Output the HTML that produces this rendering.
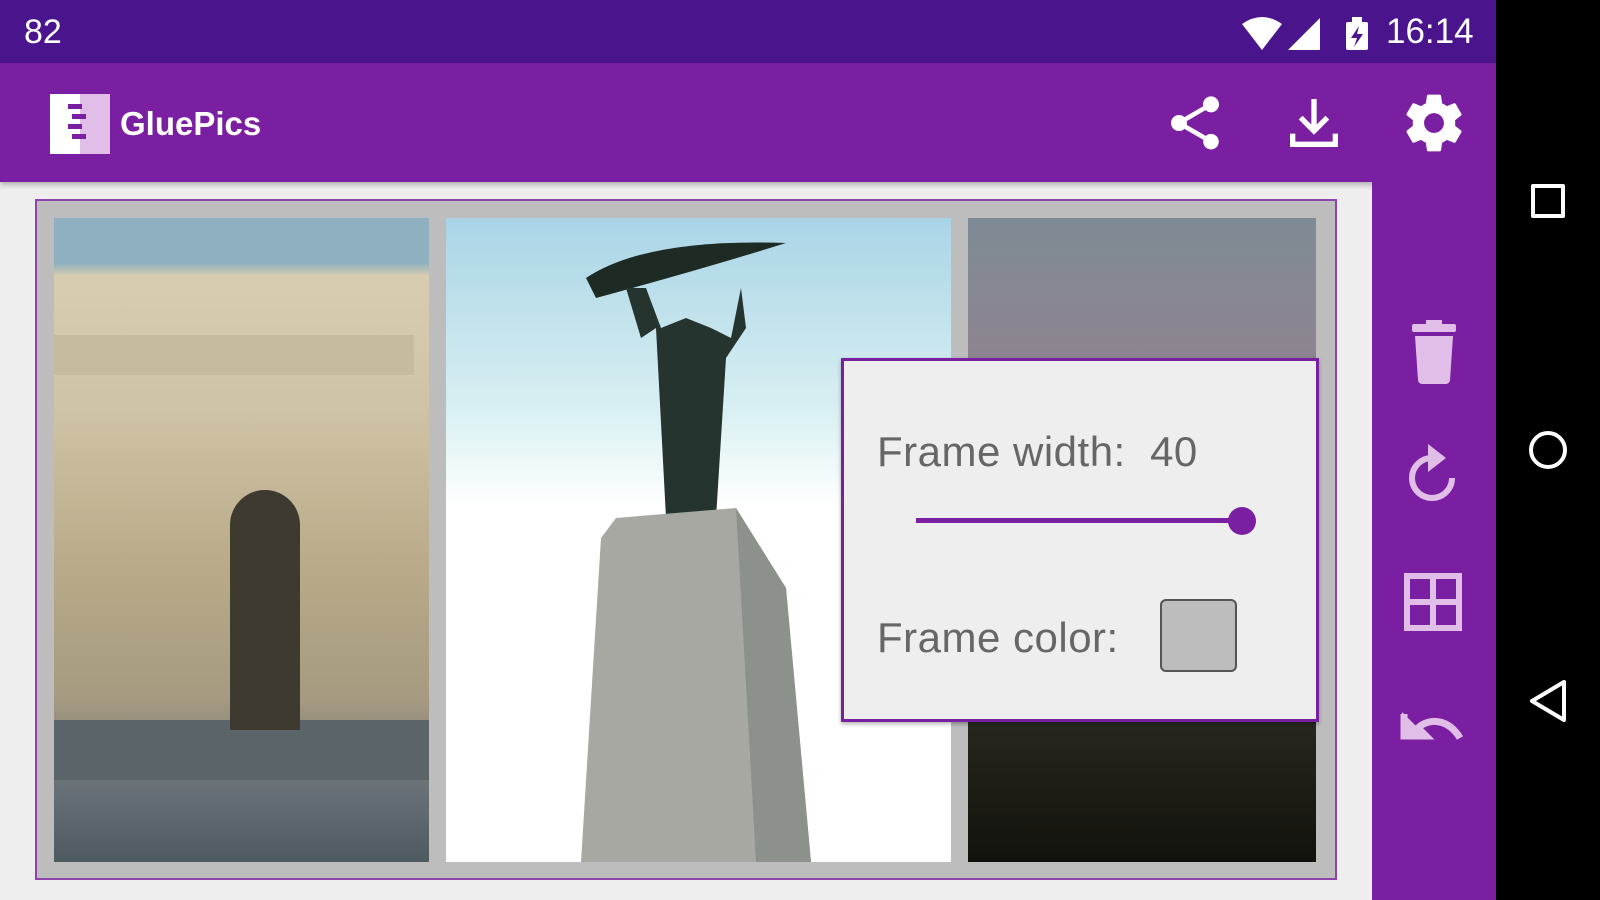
<!DOCTYPE html>
<html><head><meta charset="utf-8"><style>
*{margin:0;padding:0;box-sizing:border-box}
body{width:1600px;height:900px;overflow:hidden;background:#eee;font-family:"Liberation Sans",sans-serif;position:relative}
.a{position:absolute}
</style></head><body>
<div class="a" style="left:0;top:0;width:1496px;height:63px;background:#4a148c"></div>
<div class="a" style="left:24px;top:13px;color:#fff;font-size:34px">82</div>
<svg class="a" style="left:1240px;top:14px" width="160" height="40" viewBox="0 0 160 40">
<path d="M2 10 Q22 -4 42 10 L22 36 Z" fill="#fff"/>
<path d="M80 4 L80 36 L48 36 Z" fill="#fff"/>
<rect x="106" y="8" width="22" height="28" rx="2" fill="#fff"/><rect x="112" y="3" width="10" height="6" fill="#fff"/>
<path d="M119 12 L111 24 L117 24 L114 33 L123 20 L117 20 Z" fill="#4a148c"/>
</svg>
<div class="a" style="left:1386px;top:12px;color:#fff;font-size:35px">16:14</div>
<div class="a" style="left:0;top:63px;width:1496px;height:119px;background:#7b1fa2;box-shadow:0 3px 5px rgba(0,0,0,.25)"></div>
<svg class="a" style="left:50px;top:94px" width="60" height="60" viewBox="0 0 60 60">
<rect x="0" y="0" width="30" height="60" fill="#fff"/><rect x="30" y="0" width="30" height="60" fill="#e1bee7"/>
<g fill="#7b1fa2"><rect x="18" y="10" width="14" height="5"/><rect x="22" y="20" width="14" height="5"/><rect x="18" y="30" width="14" height="5"/><rect x="22" y="40" width="14" height="5"/></g>
</svg>
<div class="a" style="left:120px;top:105px;color:#fff;font-size:33px;font-weight:bold">GluePics</div>
<svg class="a" style="left:1163px;top:91px" width="64" height="64" viewBox="0 0 24 24"><path fill="#fff" d="M18 16.08c-.76 0-1.440.3-1.96.77L8.91 12.7c.05-.23.09-.46.09-.7s-.04-.47-.09-.7l7.050-4.11c.54.5 1.250.81 2.040.81 1.660 0 3-1.340 3-3s-1.340-3-3-3-3 1.340-3 3c0 .24.04.47.09.7L8.04 9.81C7.5 9.31 6.79 9 6 9c-1.66 0-3 1.34-3 3s1.34 3 3 3c.79 0 1.5-.31 2.04-.81l7.12 4.16c-.05.21-.08.43-.08.65 0 1.61 1.31 2.92 2.92 2.92s2.92-1.31 2.92-2.92-1.31-2.92-2.92-2.92z"/></svg>
<svg class="a" style="left:1282px;top:91px" width="64" height="64" viewBox="0 0 24 24"><path fill="none" stroke="#fff" stroke-width="2" d="M12 3v12M7 10l5 5 5-5M4 16v4h16v-4"/></svg>
<svg class="a" style="left:1400px;top:89px" width="68" height="68" viewBox="0 0 24 24"><path fill="#fff" d="M19.43 12.98c.04-.32.07-.64.07-.98s-.03-.66-.07-.98l2.11-1.65c.19-.15.24-.42.12-.64l-2-3.46c-.12-.22-.39-.3-.61-.22l-2.49 1c-.52-.4-1.08-.73-1.69-.98l-.38-2.65C14.46 2.18 14.25 2 14 2h-4c-.25 0-.46.18-.49.42l-.38 2.65c-.61.25-1.17.59-1.69.98l-2.49-1c-.23-.09-.49 0-.61.22l-2 3.46c-.13.22-.07.49.12.64l2.11 1.65c-.04.32-.07.65-.07.98s.03.66.07.98l-2.11 1.65c-.19.15-.24.42-.12.64l2 3.46c.12.22.39.3.61.22l2.49-1c.52.4 1.08.73 1.69.98l.38 2.65c.03.24.24.42.49.42h4c.25 0 .46-.18.49-.42l.38-2.65c.61-.25 1.17-.59 1.69-.98l2.49 1c.23.09.49 0 .61-.22l2-3.46c.12-.22.07-.49-.12-.64l-2.11-1.65zM12 15.5c-1.93 0-3.5-1.57-3.5-3.5s1.57-3.5 3.5-3.5 3.5 1.57 3.5 3.5-1.57 3.5-3.5 3.5z"/></svg>
<div class="a" style="left:1496px;top:0;width:104px;height:900px;background:#000"></div>
<div class="a" style="left:1531px;top:184px;width:34px;height:34px;border:4px solid #fff;border-radius:2px"></div>
<div class="a" style="left:1529px;top:431px;width:38px;height:38px;border:4px solid #fff;border-radius:50%"></div>
<svg class="a" style="left:1526px;top:678px" width="44" height="46" viewBox="0 0 44 46"><path d="M38 4 L6 23 L38 42 Z" fill="none" stroke="#fff" stroke-width="4" stroke-linejoin="round"/></svg>
<div class="a" style="left:1372px;top:182px;width:124px;height:718px;background:#7b1fa2"></div>
<svg class="a" style="left:1406px;top:320px" width="56" height="64" viewBox="0 0 56 64"><rect x="6" y="4" width="44" height="8" rx="2" fill="#e1bee7"/><rect x="20" y="0" width="16" height="6" fill="#e1bee7"/><path d="M9 16h38l-3 44c0 2-2 4-4 4H16c-2 0-4-2-4-4z" fill="#e1bee7"/></svg>
<svg class="a" style="left:1402px;top:444px" width="64" height="64" viewBox="0 0 64 64"><path d="M30 14 A20 20 0 1 0 50 34" fill="none" stroke="#e1bee7" stroke-width="6"/><path d="M26 0 L26 28 L44 14 Z" fill="#e1bee7"/></svg>
<svg class="a" style="left:1403px;top:572px" width="60" height="60" viewBox="0 0 60 60"><g fill="none" stroke="#e1bee7" stroke-width="6"><rect x="4" y="4" width="52" height="52"/><path d="M30 4v52M4 30h52"/></g></svg>
<svg class="a" style="left:1400px;top:708px" width="68" height="40" viewBox="0 0 68 40"><path d="M4 6v22h22l-8-8C28 10 48 10 60 30" fill="none" stroke="#e1bee7" stroke-width="7"/><path d="M2 4v26h26z" fill="#e1bee7"/></svg>
<div class="a" style="left:35px;top:199px;width:1302px;height:681px;background:#bdbdbd;border:2px solid #8e44ad"></div>
<div class="a" style="left:54px;top:218px;width:375px;height:644px;background:linear-gradient(180deg,#8fb0c0 0,#8fb0c0 7%,#d8cdb0 9%,#cfc3a5 30%,#b8aa88 55%,#a59a80 75%,#6a7278 88%,#4d5a60 100%)"></div>
<div class="a" style="left:54px;top:335px;width:360px;height:40px;background:#c6bb9f"></div>
<div class="a" style="left:54px;top:720px;width:375px;height:60px;background:#5b6468"></div>
<div class="a" style="left:230px;top:490px;width:70px;height:240px;background:#3e3a30;border-radius:35px 35px 0 0"></div>
<div class="a" style="left:446px;top:218px;width:505px;height:644px;background:linear-gradient(180deg,#a9d4e6 0,#d9f0f2 30%,#fff 45%,#fff 100%)"></div>
<svg class="a" style="left:446px;top:218px" width="505" height="644" viewBox="0 0 505 644"><path d="M140 60 Q200 20 340 25 Q260 50 150 80 Z" fill="#1e2a24"/><path d="M180 70 L195 120 L210 110 L220 300 L270 300 L280 140 L300 110 L295 70 L285 120 L265 110 L240 100 L215 110 L200 70Z" fill="#263430"/><path d="M170 300 L290 290 L340 370 L365 644 L135 644 L155 320Z" fill="#a7a8a2"/><path d="M290 290 L340 370 L365 644 L310 644 Z" fill="#8d918b"/></svg>
<div class="a" style="left:968px;top:218px;width:348px;height:644px;background:linear-gradient(180deg,#7e8b94 0,#8d8590 20%,#7c7b80 40%,#2a2a22 75%,#12120c 100%)"></div>
<div class="a" style="left:841px;top:358px;width:478px;height:364px;background:#eee;border:3px solid #7b1fa2;box-shadow:0 2px 4px rgba(0,0,0,.3)"></div>
<div class="a" style="left:877px;top:428px;font-size:42px;color:#666;white-space:pre;letter-spacing:0.5px">Frame width:  40</div>
<div class="a" style="left:916px;top:518px;width:326px;height:5px;background:#7b1fa2"></div>
<div class="a" style="left:1228px;top:507px;width:28px;height:28px;border-radius:50%;background:#7b1fa2"></div>
<div class="a" style="left:877px;top:614px;font-size:42px;color:#666;letter-spacing:0.5px">Frame color:</div>
<div class="a" style="left:1160px;top:599px;width:77px;height:73px;background:#bdbdbd;border:2px solid #555;border-radius:6px"></div>
</body></html>
